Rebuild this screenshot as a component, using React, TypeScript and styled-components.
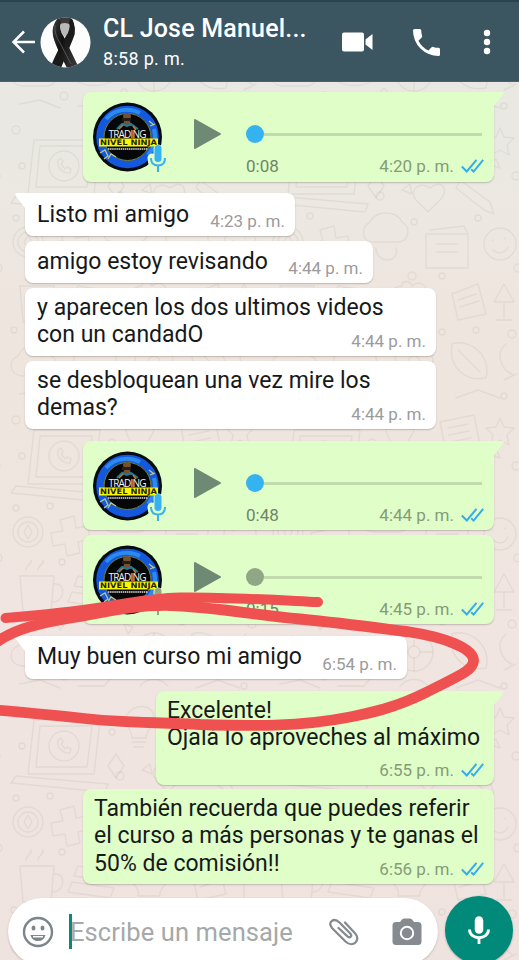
import React from "react";
import styled, { createGlobalStyle } from "styled-components";

const Global = createGlobalStyle`
  * { box-sizing: border-box; }
  html, body { margin: 0; padding: 0; overflow: hidden; background: #efe5e0; }
  body { font-family: Roboto, "Liberation Sans", sans-serif; }
  svg { display: block; flex: none; }
`;

const Screen = styled.div`
  position: relative;
  width: 519px;
  height: 960px;
  overflow: hidden;
  display: flex;
  flex-direction: column;
  isolation: isolate;
  background: linear-gradient(#e9e8e3 82px, #ece8e2 200px, #efe5df 300px, #f0e5e0 620px, #efe3df 960px);
`;

const Wallpaper = styled.svg`
  position: absolute;
  inset: 0;
  z-index: -1;
`;

const Scribble = styled.svg`
  position: absolute;
  inset: 0;
  pointer-events: none;
`;

const Header = styled.header`
  height: 82px;
  flex: none;
  display: flex;
  align-items: center;
  padding: 1px 0 0 10px;
  background: #3b5561;
  border-top: 2px solid #2b434e;
  border-bottom: 1px solid #4b616b;
  color: #fff;
`;

const Contact = styled.div`
  width: 239px;
  margin-left: 12px;
  display: flex;
  flex-direction: column;
`;

const Name = styled.div`
  font-size: 25px;
  line-height: 31px;
  font-weight: 500;
  letter-spacing: 0.2px;
  white-space: nowrap;
`;

const Status = styled.div`
  font-size: 18px;
  line-height: 24px;
  margin-top: 3px;
  letter-spacing: 0.3px;
  white-space: nowrap;
`;

const Actions = styled.div`
  flex: 1;
  display: flex;
  align-items: center;
`;

const Chat = styled.main`
  height: 803px;
  flex: none;
  display: flex;
  flex-direction: column;
  padding: 10px 25px 0;
`;

const Bubble = styled.section<{ $out?: boolean; $w: number; $h: number; $gap?: number; $top?: number }>`
  position: relative;
  display: flex;
  flex-direction: column;
  flex: none;
  align-self: ${(p) => (p.$out ? "flex-end" : "flex-start")};
  width: ${(p) => p.$w}px;
  height: ${(p) => p.$h}px;
  margin-bottom: ${(p) => p.$gap ?? 5}px;
  padding: ${(p) => p.$top ?? 6}px 10px 0 ${(p) => (p.$out ? 11 : 12)}px;
  border-radius: 8px;
  background: ${(p) => (p.$out ? "#e0fec7" : "#fff")};
  box-shadow: 0 1px 1.5px rgba(90, 80, 70, 0.32);
`;

const Tail = styled.svg<{ $out?: boolean }>`
  position: absolute;
  top: 0;
  ${(p) => (p.$out ? "right: -10px;" : "left: -10px;")}
`;

const Text = styled.p`
  margin: 0;
  font-size: 23px;
  line-height: 27.4px;
  letter-spacing: 0.02px;
  color: #16191a;
  white-space: pre;
`;

const LastRow = styled.div`
  flex: 1;
  display: flex;
  justify-content: space-between;
`;

const Meta = styled.div<{ $out?: boolean }>`
  align-self: flex-end;
  margin: 0 0 5px auto;
  display: flex;
  gap: 7px;
  font-size: 17px;
  line-height: 20px;
  white-space: nowrap;
  color: ${(p) => (p.$out ? "#849c78" : "#9b9b9b")};
`;

const VoiceBody = styled.div`
  display: flex;
  align-items: flex-start;
  margin-left: -1px;
`;

const Logo = styled.div`
  margin-top: 10px;
`;

const Play = styled.div`
  margin: 26px 0 0 22px;
`;

const Player = styled.div`
  width: 238px;
  margin: 32px 0 0 24px;
`;

const Track = styled.div`
  height: 20px;
  display: flex;
  align-items: center;
`;

const Knob = styled.i<{ $played?: boolean }>`
  flex: none;
  width: 18px;
  height: 18px;
  border-radius: 50%;
  background: ${(p) => (p.$played ? "#35b3f0" : "#8fa785")};
`;

const Rail = styled.i`
  width: 218px;
  height: 3px;
  background: #c2dbad;
`;

const PlayerInfo = styled.div`
  display: flex;
  margin-top: 12px;
`;

const Duration = styled.div`
  font-size: 17px;
  line-height: 20px;
  color: #6f8568;
`;

const Composer = styled.footer`
  display: flex;
  flex: none;
  height: 75px;
  padding: 11px 6px 0 8px;
  justify-content: space-between;
`;

const Field = styled.div`
  width: 430px;
  height: 67px;
  margin-top: 2px;
  border-radius: 34px;
  background: #fff;
  box-shadow: 0 1px 2px rgba(90, 80, 70, 0.3);
  display: flex;
  align-items: center;
  padding-left: 14px;
`;

const Caret = styled.i`
  width: 3px;
  height: 35px;
  margin-left: 15px;
  background: #078a78;
`;

const Placeholder = styled.div`
  width: 259px;
  margin-left: -2px;
  font-size: 25.5px;
  line-height: 32px;
  letter-spacing: 0.1px;
  color: #a6a8a9;
  white-space: nowrap;
`;

const Record = styled.div`
  width: 68px;
  height: 68px;
  border-radius: 50%;
  background: #018a79;
  box-shadow: 0 1px 2px rgba(60, 60, 60, 0.4);
  display: flex;
  align-items: center;
  justify-content: center;
`;

const CallIcon = styled.svg`
  margin-left: 40px;
`;

const DotsIcon = styled.svg`
  margin-left: 43px;
`;

const PhotoIcon = styled.svg`
  margin-left: 33px;
`;

const Doodles = () => (
  <Wallpaper width="519" height="960" fill="none" stroke="#7b7468" strokeOpacity="0.1" strokeWidth="1.4">
    <defs>
      <pattern id="doodle" width="260" height="290" patternUnits="userSpaceOnUse" patternTransform="translate(8 118)">
        <g strokeLinejoin="round" strokeLinecap="round">
          <path d="M26 22h66l-6 54H20zM32 28h52l-5 41H28zM8 78l92 8-3 8-94-9z" />
          <circle cx="56" cy="48" r="15" />
          <path d="M50 42c-2 8 6 14 12 13l1-4-4-2-2 2-4-5 2-2-2-4z" />
          <path d="M118 18c8-14 28-12 28 2 0 8-8 12-8 20h-14c0-8-8-14-6-22zM124 44h14M126 49h10" />
          <path d="M172 14l34-7 6 30-34 7zM180 20l20-4M181 27l20-4M183 34l20-4" />
          <path d="M232 10l4 9 10 1-7 7 2 10-9-5-9 5 2-10-7-7 10-1z" />
          <circle cx="20" cy="124" r="15" /><circle cx="20" cy="124" r="10" />
          <path d="M16 124l4-7 4 7-4 7zM52 112l14-4 2 12 12-2 2 13-12 3 2 11-13 3-2-12-12 2-2-13 12-2z" />
          <path d="M102 104c6-12 26-12 32 0 10 6 6 18-2 20h-28c-12-2-10-16-2-20zM108 130c0 8 6 12 12 12s10-6 8-12" />
          <path d="M162 70c12-10 20 2 10 12l-12 12-12-12c-8-10 4-20 14-12zM192 62l30 22M188 70l28 22M192 62l-4 8M222 84l4 12-10-4" />
          <path d="M158 116h42v34h-42zM162 112l34-4 4 8M168 126h22M168 134h22" />
          <circle cx="232" cy="126" r="16" /><path d="M225 122v1M237 120v1M225 132c6 5 12 3 15-3" />
          <path d="M12 168h34l-3 36H15zM46 176c12-2 12 18-2 18M18 162c0-6 6-4 5-10M30 162c0-6 6-4 5-10" />
          <path d="M70 168l40 6-4 10-40-6zM64 184l42 6-4 10-42-6zM70 202h38v10H70z" />
          <path d="M134 168c-8 0-14 8-10 16 2 4 8 6 6 14h22c-2-8 8-10 8-20 0-12-10-16-16-10-2-6-10-6-10 0z" />
          <path d="M184 176l26-10 8 30-28 6zM190 182l18-6M192 189l19-6" />
          <path d="M236 166l10 18h-20zM236 184v16M228 202h16" />
          <path d="M10 238c8-16 24-10 22 0 18-6 24 16 8 20H14c-14-2-14-16-4-20z" />
          <path d="M68 230c10 8 30 8 38 0l4 20c-14 10-34 10-46 0zM82 244h8" />
          <circle cx="146" cy="244" r="19" /><circle cx="146" cy="244" r="6" /><path d="M146 225v13M146 250v13M127 244h13M152 244h13" />
          <path d="M184 226c18-6 40 12 34 34-20 4-38-10-34-34zM190 232l22 22M238 226c-12 10-4 26 6 30M236 262l12-6" />
          <path d="M100 68l8-12 8 12-8 12zM220 46l8-5 4 9zM142 66l-8 6 10 4zM52 222l-4-8 9 2zM116 216l9 3-5 7z" />
          <path d="M12 276l20-4 20 8M70 278h26l6-7M132 278c8-9 20-9 28 0M188 280l22-8 22 8" />
        </g>
        {[[8, 12], [14, 48], [104, 34], [112, 78], [156, 48], [218, 56], [248, 58], [8, 100], [42, 98], [90, 134], [146, 104], [210, 100], [250, 150], [54, 154], [90, 154], [144, 158], [174, 158], [208, 212], [56, 268], [116, 264], [174, 214], [244, 216], [6, 212], [236, 278]].map(([x, y], i) => (
          <circle key={i} cx={x} cy={y} r={i % 3 ? 3 : 4} />
        ))}
      </pattern>
    </defs>
    <rect width="519" height="960" fill="url(#doodle)" stroke="none" />
  </Wallpaper>
);

const Ribbon = () => (
  <svg width="51" height="51" viewBox="0 0 51 51">
    <defs>
      <clipPath id="face"><circle cx="25.5" cy="25.5" r="25" /></clipPath>
      <linearGradient id="silk" x1="0" x2="1" y1="0" y2="0.5">
        <stop offset="0" stopColor="#3c3c3c" /><stop offset="0.45" stopColor="#111" /><stop offset="1" stopColor="#333" />
      </linearGradient>
    </defs>
    <g clipPath="url(#face)">
      <rect width="51" height="51" fill="#fdfdfd" />
      <path d="M17 2Q25-4 33 3L34 9L19 10z" fill="#3a3a3a" />
      <path d="M18 8Q25 4 31 8Q30 14 25 20Q19 14 18 8z" fill="#b9b9b9" />
      <path d="M31 1Q38 11 33 22L21 51H10Q18 32 26 19Q31 12 29 5z" fill="#1b1b1b" />
      <path d="M18 1Q11 9 13 19Q15 28 27 51H39L24 20Q18 12 21 5z" fill="url(#silk)" />
      <path d="M15 8Q14 17 20 26L31 47" fill="none" stroke="#555" strokeWidth="1" />
    </g>
  </svg>
);

const Ticks = () => (
  <svg width="23" height="20" viewBox="0 0 23 20" fill="none" stroke="#35adeb" strokeWidth="2">
    <path d="M0.8 10.500l5 5L15.500 3.800M10.200 13.200l2.400 2.400L22.200 3.800" />
  </svg>
);

const InTail = () => (
  <Tail width="18" height="18" viewBox="0 0 18 18"><path d="M1 0H18V18H10V15L0.7 2.800Q-.3 0 1 0z" fill="#fff" /></Tail>
);

const OutTail = () => (
  <Tail $out width="18" height="18" viewBox="0 0 18 18"><path d="M0 0H17Q18.500 1 17 2.800L8 14V18H0z" fill="#e0fec7" /></Tail>
);

const NinjaLogo = ({ mic }: { mic: string }) => (
  <svg width="78" height="78" viewBox="0 0 78 78">
    <circle cx="34.500" cy="35" r="34.500" fill="#070b12" />
    <circle cx="34.500" cy="35" r="27.500" fill="none" stroke="#1458dd" strokeWidth="7.500" />
    <path d="M13 17A28 28 0 0 1 47 11M61 27A28 28 0 0 1 55 53" fill="none" stroke="#2b8af0" strokeWidth="4" />
    <circle cx="34.500" cy="35" r="23.500" fill="#050708" stroke="#778746" strokeWidth="1" />
    <path d="M7 51l5-3 3 6-4 3M15 57l3-5 5 3M56 19l5 4M57 24l5-2" stroke="#b9c98c" strokeWidth="1.300" fill="none" />
    <path d="M30 13Q34 9 38 13L37 20L40 24H28L31 20z" fill="#76502f" />
    <path d="M29 16h9v3h-9z" fill="#231d1a" />
    <path d="M24 27l5-5 5 2 4-2 7 5" fill="none" stroke="#187b9a" strokeWidth="2" />
    <path d="M26 27l4-4M40 24l3 4" stroke="#cb7820" strokeWidth="1.500" />
    <text x="34.500" y="35.600" textAnchor="middle" textLength="38" fontFamily="Open Sans, sans-serif" fontSize="10" fill="#f3f3f3">TRADING</text>
    <rect x="6" y="36.500" width="59" height="8" fill="#fcf600" />
    <text x="35.500" y="43.300" textAnchor="middle" textLength="57" lengthAdjust="spacingAndGlyphs" fontFamily="DejaVu Sans, sans-serif" fontSize="7.500" fontWeight="700" fill="#242500">NIVEL NINJA</text>
    <path d="M15 47H55" stroke="#ddd" strokeWidth="1.300" strokeDasharray="1.500 .6" />
    <path d="M65 47v10M59 56q0 8 6 8t6-8" stroke="#e0fec7" strokeWidth="9" fill="none" strokeLinecap="round" />
    <path d="M65 46.500v10" stroke={mic} strokeWidth="7" strokeLinecap="round" />
    <path d="M58 56q0 7.500 7 7.500t7-7.500M65 63.500V70" stroke={mic} strokeWidth="2" fill="none" />
  </svg>
);

const Voice = ({ time, length, played, tail, gap, h }: { time: string; length: string; played?: boolean; tail?: boolean; gap: number; h: number }) => (
  <Bubble $out $w={411} $h={h} $gap={gap} $top={0}>
    {tail && <OutTail />}
    <VoiceBody>
      <Logo><NinjaLogo mic={played ? "#35b3f0" : "#8fa785"} /></Logo>
      <Play>
        <svg width="29" height="32" viewBox="0 0 29 32"><path d="M2 2L27 16L2 30z" fill="#6e8a75" stroke="#6e8a75" strokeWidth="2" strokeLinejoin="round" /></svg>
      </Play>
      <Player>
        <Track><Knob $played={played} /><Rail /></Track>
        <PlayerInfo>
          <Duration>{length}</Duration>
          <Meta $out>{time}<Ticks /></Meta>
        </PlayerInfo>
      </Player>
    </VoiceBody>
  </Bubble>
);

type MessageProps = { lines: string[]; last?: string; time: string; out?: boolean; tail?: boolean; w: number; h: number; gap?: number; top?: number };

const Message = ({ lines, last, time, out, tail, w, h, gap, top }: MessageProps) => (
  <Bubble $out={out} $w={w} $h={h} $gap={gap} $top={top}>
    {tail && (out ? <OutTail /> : <InTail />)}
    {lines.map((line) => <Text key={line}>{line}</Text>)}
    <LastRow>
      {last && <Text>{last}</Text>}
      <Meta $out={out}>{time}{out && <Ticks />}</Meta>
    </LastRow>
  </Bubble>
);

export default function App() {
  return (
    <Screen>
      <Global />
      <Doodles />
      <Header>
        <svg width="30" height="26" viewBox="0 0 30 26" fill="none" stroke="#fff" strokeWidth="2.500">
          <path d="M14 2.500L3.500 13L14 23.500M3.500 13H25" />
        </svg>
        <Ribbon />
        <Contact>
          <Name>CL Jose Manuel...</Name>
          <Status>8:58 p. m.</Status>
        </Contact>
        <Actions>
          <svg width="31" height="20" viewBox="0 0 31 20" fill="#fff">
            <rect x="0" y="0.500" width="22" height="19" rx="2" /><path d="M23.500 7.500L30.500 2v16l-7-5.500z" />
          </svg>
          <CallIcon width="27" height="27" viewBox="3 3 18 18" fill="#fff">
            <path d="M6.62 10.79a15.15 15.15 0 0 0 6.59 6.59l2.2-2.2a1 1 0 0 1 1.02-.24c1.12.37 2.33.57 3.57.57a1 1 0 0 1 1 1V20a1 1 0 0 1-1 1A17 17 0 0 1 3 4a1 1 0 0 1 1-1h3.5a1 1 0 0 1 1 1c0 1.25.2 2.45.57 3.57a1 1 0 0 1-.25 1.02z" />
          </CallIcon>
          <DotsIcon width="8" height="26" viewBox="0 0 8 26" fill="#fff">
            <circle cx="4" cy="4" r="3.200" /><circle cx="4" cy="13" r="3.200" /><circle cx="4" cy="22" r="3.200" />
          </DotsIcon>
        </Actions>
      </Header>

      <Chat>
        <Voice h={90} gap={11} length="0:08" time="4:20 p. m." played tail />
        <Message w={270} h={43} top={8} tail lines={[]} last="Listo mi amigo" time="4:23 p. m." />
        <Message w={348} h={42} top={7} lines={[]} last="amigo estoy revisando" time="4:44 p. m." />
        <Message w={411} h={68} lines={["y aparecen los dos ultimos videos"]} last="con un candadO" time="4:44 p. m." />
        <Message w={411} h={68} gap={12} lines={["se desbloquean una vez mire los"]} last="demas?" time="4:44 p. m." />
        <Voice h={89} gap={5} length="0:48" time="4:44 p. m." played tail />
        <Voice h={89} gap={12} length="0:15" time="4:45 p. m." />
        <Message w={382} h={43} top={7} gap={12} tail lines={[]} last="Muy buen curso mi amigo" time="6:54 p. m." />
        <Message out tail w={338} h={94} gap={4} lines={["Excelente!", "Ojalá lo aproveches al máximo"]} time="6:55 p. m." />
        <Message out w={411} h={95} gap={0} lines={["También recuerda que puedes referir", "el curso a más personas y te ganas el"]} last="50% de comisión!!" time="6:56 p. m." />
      </Chat>

      <Composer>
        <Field>
          <svg width="32" height="32" viewBox="0 0 32 32" fill="none" stroke="#7b858a" strokeWidth="2.400">
            <circle cx="16" cy="16" r="14" />
            <path d="M8.500 19H23.500Q22 25 16 25T8.500 19z" fill="#7b858a" stroke="none" /><path d="M11 20.700H21" stroke="#fff" strokeWidth="1.500" />
            <ellipse cx="11.500" cy="12" rx="2" ry="2.600" fill="#7b858a" stroke="none" /><ellipse cx="20.500" cy="12" rx="2" ry="2.600" fill="#7b858a" stroke="none" />
          </svg>
          <Caret />
          <Placeholder>Escribe un mensaje</Placeholder>
          <svg width="30" height="28" viewBox="0 0 30 28" fill="none" stroke="#858b8f" strokeWidth="2.300" strokeLinecap="round">
            <path d="M9.500 10L18.500 18.300C21 20.500 23.500 18 21.300 15.500L10.500 4.500C4.500-1-2 4.500 3 10L16.500 23.500C24 30.500 32.500 22 26 15.200L16 4.500" />
          </svg>
          <PhotoIcon width="30" height="28" viewBox="0 0 30 28">
            <path d="M9.500 2Q10.500 .5 12 .5h6q1.500 0 2.500 1.500L22 4h4q3.500 0 3.500 3.500v16Q29.500 27 26 27H4Q.5 27 .5 23.500v-16Q.5 4 4 4h4z" fill="#858b8f" />
            <circle cx="15" cy="15" r="6.200" fill="none" stroke="#fff" strokeWidth="2" />
          </PhotoIcon>
        </Field>
        <Record>
          <svg width="24" height="32" viewBox="0 0 24 32" fill="none" stroke="#fff">
            <path d="M12 6.500v9" strokeWidth="8.500" strokeLinecap="round" /><path d="M2.500 15.500c0 11 19 11 19 0M12 23v7" strokeWidth="2.800" />
          </svg>
        </Record>
      </Composer>

      <Scribble width="519" height="960" fill="none" stroke="#ee5150" strokeLinecap="round" strokeLinejoin="round">
        <path d="M5.500 618C42 615 72 612 104 607C135 602 153 598 180 597.500C225 597 275 600 318 602" strokeWidth="10" />
        <path d="M-5 643C15 629 38 623 80 616.500C120 609 142 605 170 605.500C215 607 255 615 300 619C350 624 385 629 410 632C443 637 474 648 473.500 661C473 671 456 677 427 692C395 708 370 713 350 717C300 727 250 726 200 724.500C155 722 120 723 80 718C40 714 20 712 -5 710" strokeWidth="10.800" />
      </Scribble>
    </Screen>
  );
}
